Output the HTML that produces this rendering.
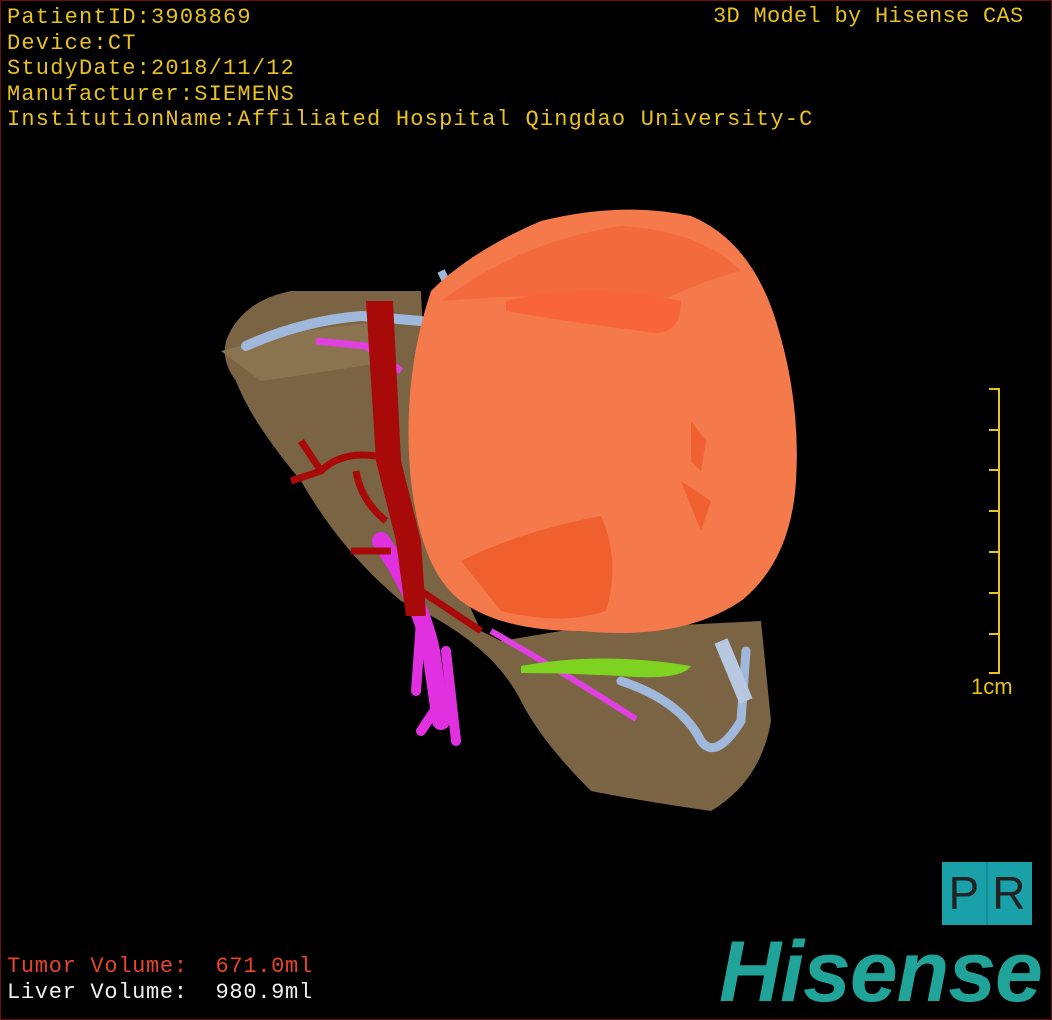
<!DOCTYPE html>
<html><head><style>
html,body{margin:0;padding:0;background:#000;}
#c{position:relative;width:1052px;height:1020px;background:#000;overflow:hidden;box-sizing:border-box;border:1px solid #6a1010;}
.t{position:absolute;font-family:"Liberation Mono",monospace;font-size:22px;color:#e8c21e;letter-spacing:1.2px;white-space:pre;line-height:25.5px;}
.r{color:#e8442a;letter-spacing:0.7px;}
.w{color:#f0f0f0;letter-spacing:0.7px;}
</style></head><body><div id="c">
<svg width="1052" height="1020" style="position:absolute;left:0;top:0">
<path d="M225 340 Q240 300 290 290 L420 290 L430 520 L480 630 L500 640 L560 630 L760 620 L770 720 Q760 780 710 810 Q640 800 590 790 Q540 740 520 700 Q490 640 400 600 Q340 550 300 480 Q250 420 235 380 Q220 360 225 340Z" fill="#7a6444"/>
<path d="M220 350 Q260 340 300 330 L380 320 L390 360 Q330 370 260 380Z" fill="#8a7450"/>
<path d="M245 345 Q300 320 360 315 L420 320" stroke="#9fb8dc" stroke-width="10" fill="none" stroke-linecap="round"/>
<path d="M440 270 L450 290" stroke="#9fb8dc" stroke-width="8"/>
<path d="M620 680 Q680 700 700 740 Q715 760 740 720 L745 650" stroke="#9fb8dc" stroke-width="9" fill="none" stroke-linecap="round"/>
<path d="M720 640 L745 700" stroke="#b8c8e0" stroke-width="14"/>
<path d="M315 340 L365 345 L400 370" stroke="#e040e0" stroke-width="7" fill="none"/>
<path d="M380 540 Q420 600 430 650 L440 720" stroke="#e030e0" stroke-width="18" fill="none" stroke-linecap="round"/>
<path d="M420 620 L415 690 M445 650 L455 740 M440 700 L420 730" stroke="#e030e0" stroke-width="10" fill="none" stroke-linecap="round"/>
<path d="M490 630 Q560 670 635 718" stroke="#e040e0" stroke-width="6" fill="none"/>
<path d="M520 665 Q600 650 690 665 Q680 680 620 675 Q560 672 520 672Z" fill="#7ed321"/>
<path d="M365 300 L392 300 L400 460 L420 540 L425 615 L405 615 L395 540 L375 460Z" fill="#a80a0a"/>
<path d="M375 455 Q340 450 320 470 L290 480 M320 470 L300 440 M385 520 Q360 500 355 470 M390 550 L350 550 M420 590 L480 630" stroke="#a80a0a" stroke-width="7" fill="none"/>
<path d="M430 290 Q470 250 540 220 Q620 200 690 215 Q750 240 775 320 Q800 400 795 480 Q790 560 740 600 Q680 640 580 630 Q500 630 460 600 Q420 570 410 480 Q400 380 430 290Z" fill="#f47a4c"/>
<path d="M440 300 Q520 240 620 225 Q700 230 740 270 Q700 280 660 300 Q560 290 440 300Z" fill="#f26a3e"/>
<path d="M505 300 Q590 280 680 300 Q680 340 640 330 Q560 320 505 310Z" fill="#f9653a"/>
<path d="M460 560 Q520 530 600 515 Q620 560 605 610 Q560 625 500 610Z" fill="#f0602e"/>
<path d="M690 420 L705 440 L700 470 L690 460Z M680 480 L710 500 L700 530 Z" fill="#f06030"/>
</svg>
<div style="position:absolute;left:997px;top:387px;width:2px;height:286px;background:#e8c21e"></div>
<div style="position:absolute;left:988px;top:387px;width:10px;height:2px;background:#e8c21e"></div>
<div style="position:absolute;left:988px;top:428px;width:10px;height:2px;background:#e8c21e"></div>
<div style="position:absolute;left:988px;top:468px;width:10px;height:2px;background:#e8c21e"></div>
<div style="position:absolute;left:988px;top:509px;width:10px;height:2px;background:#e8c21e"></div>
<div style="position:absolute;left:988px;top:550px;width:10px;height:2px;background:#e8c21e"></div>
<div style="position:absolute;left:988px;top:591px;width:10px;height:2px;background:#e8c21e"></div>
<div style="position:absolute;left:988px;top:632px;width:10px;height:2px;background:#e8c21e"></div>
<div style="position:absolute;left:988px;top:671px;width:10px;height:2px;background:#e8c21e"></div>
<div class="t" style="left:970px;top:673px;letter-spacing:0;font-family:'Liberation Sans',sans-serif">1cm</div>
<div class="t" style="left:6px;top:4px">PatientID:3908869
Device:CT
StudyDate:2018/11/12
Manufacturer:SIEMENS
InstitutionName:Affiliated Hospital Qingdao University-C</div>
<div class="t" style="left:712px;top:3px;letter-spacing:0.3px">3D Model by Hisense CAS</div>
<div class="t r" style="left:6px;top:953px">Tumor Volume:  671.0ml</div>
<div class="t w" style="left:6px;top:979px">Liver Volume:  980.9ml</div>
<div style="position:absolute;left:941px;top:861px;width:90px;height:63px;background:#1aa0a8"></div>
<div style="position:absolute;left:985px;top:861px;width:2px;height:63px;background:#138c94"></div>
<div style="position:absolute;left:941px;top:861px;width:90px;height:63px;font-family:'Liberation Sans',sans-serif;font-size:46px;color:#222;line-height:63px;display:flex;justify-content:space-around">P<span>R</span></div>
<div style="position:absolute;left:718px;top:926px;font-family:'Liberation Sans',sans-serif;font-weight:bold;font-style:italic;font-size:86px;color:#20a49a;line-height:90px;letter-spacing:-1px">Hisense</div>
</div></body></html>
